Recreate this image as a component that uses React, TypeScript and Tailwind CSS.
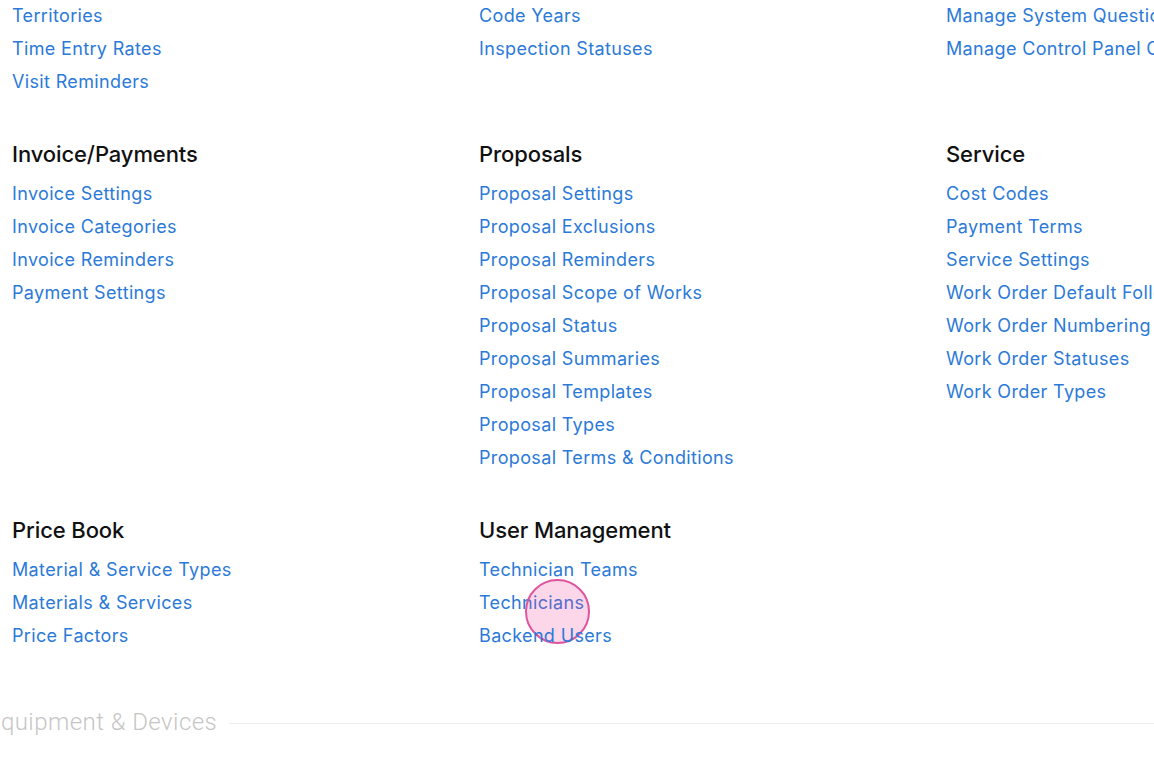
import React from "react";

const sections: { title?: string; items: string[] }[][] = [
  [
    { items: ["Territories", "Time Entry Rates", "Visit Reminders"] },
    { items: ["Code Years", "Inspection Statuses"] },
    { items: ["Manage System Questions", "Manage Control Panel Categories"] },
  ],
  [
    {
      title: "Invoice/Payments",
      items: ["Invoice Settings", "Invoice Categories", "Invoice Reminders", "Payment Settings"],
    },
    {
      title: "Proposals",
      items: [
        "Proposal Settings",
        "Proposal Exclusions",
        "Proposal Reminders",
        "Proposal Scope of Works",
        "Proposal Status",
        "Proposal Summaries",
        "Proposal Templates",
        "Proposal Types",
        "Proposal Terms & Conditions",
      ],
    },
    {
      title: "Service",
      items: [
        "Cost Codes",
        "Payment Terms",
        "Service Settings",
        "Work Order Default Follow Ups",
        "Work Order Numbering",
        "Work Order Statuses",
        "Work Order Types",
      ],
    },
  ],
  [
    {
      title: "Price Book",
      items: ["Material & Service Types", "Materials & Services", "Price Factors"],
    },
    {
      title: "User Management",
      items: ["Technician Teams", "Technicians", "Backend Users"],
    },
    { items: [] },
  ],
];

function Cell({ title, items }: { title?: string; items: string[] }) {
  return (
    <div className="flex flex-col min-w-0 overflow-hidden">
      {title && (
        <div className="h-[30px] leading-[30px] mb-[8px] text-[22px] font-medium text-[#111111] whitespace-nowrap tracking-[-0.1px]">
          {title}
        </div>
      )}
      {items.map((it) => (
        <div key={it} className="relative h-[33px] leading-[33px] whitespace-nowrap">
          <a className="text-[18px] text-[#2c7ad8] tracking-[0.35px] cursor-pointer">{it}</a>
          {it === "Technicians" && (
            <span className="absolute left-[46px] top-[-7px] w-[65px] h-[65px] rounded-full bg-[rgba(236,72,153,0.22)] border-2 border-[#e0539d]" />
          )}
        </div>
      ))}
    </div>
  );
}

export default function App() {
  return (
    <div
      className="w-[1154px] h-[780px] overflow-hidden bg-white relative"
      style={{ fontFamily: "Inter, 'Noto Sans', sans-serif" }}
    >
      <div className="flex flex-col pl-[12px] mt-[-1px] gap-y-[41px]">
        {sections.map((row, i) => (
          <div key={i} className="grid grid-cols-[467px_467px_467px]">
            {row.map((c, j) => (
              <Cell key={j} title={c.title} items={c.items} />
            ))}
          </div>
        ))}
      </div>
      <div className="flex items-center mt-[52px] ml-[-13px]">
        <span
          className="text-[24px] font-light text-[#c6c6c6] whitespace-nowrap leading-[36px] tracking-[0.45px]"
          style={{ fontFamily: "Roboto, 'Liberation Sans', sans-serif" }}
        >
          Equipment &amp; Devices
        </span>
        <div className="flex-1 h-px bg-[#ececec] ml-[12px] mt-[2px]" />
      </div>
    </div>
  );
}
